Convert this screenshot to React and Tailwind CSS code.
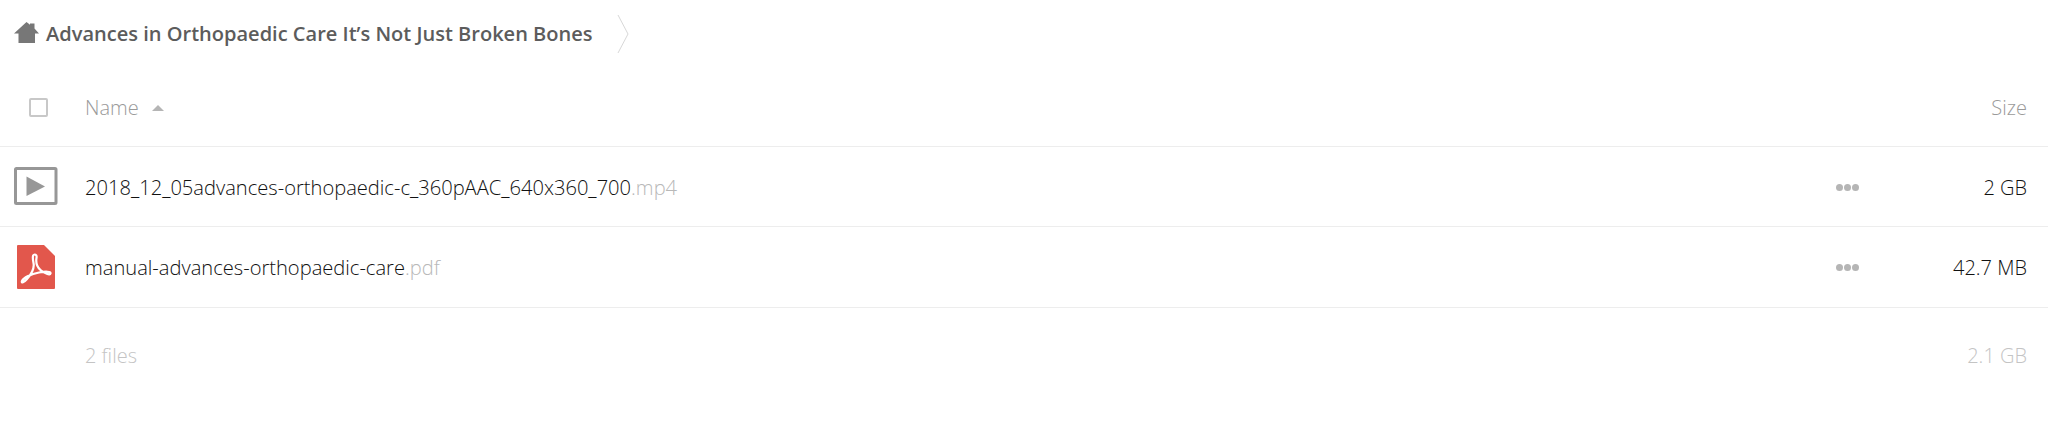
const HomeIcon = () => (
  <svg className="w-[25px] h-[21px] mb-[3px] shrink-0" viewBox="0 0 25 21" fill="#777">
    <path d="M12.500 0L16 2.800V1.500H20.500V6.500L25 11.500H21V21H4.500V11.500H0Z" />
  </svg>
);

const VideoIcon = () => (
  <svg className="w-[44px] h-[39px]" viewBox="0 0 44 39">
    <rect x="1.500" y="1.500" width="40.500" height="35" rx="1" fill="none" stroke="#979797" strokeWidth="3" />
    <path d="M12.500 9.500L31 19.500L12.500 29Z" fill="#979797" />
  </svg>
);

const PdfIcon = () => (
  <svg className="w-[38px] h-[44px]" viewBox="0 0 38 44">
    <path d="M1 0H27L38 11V43a1 1 0 0 1-1 1H1a1 1 0 0 1-1-1V1a1 1 0 0 1 1-1Z" fill="#e2574c" />
    <path
      d="M17.500 9.500C15.500 9.500 15.500 13 16.500 18C17.500 23 14.500 29 10 34C7 37.500 4 38.500 5 36C6.500 32.500 14 29 22 27.500C29 26.200 34 26.500 33.500 28.500C33 30.500 27.500 28.500 23.500 25C19.500 21.500 19 16 19.500 13C20 10.500 19 9.500 17.500 9.500Z"
      fill="none"
      stroke="#fff"
      strokeWidth="2.200"
      strokeLinejoin="round"
    />
  </svg>
);

const Dots = () => (
  <div className="flex gap-[1px]">
    <span className="w-[7px] h-[7px] rounded-full bg-[#b5b5b5]" />
    <span className="w-[7px] h-[7px] rounded-full bg-[#b5b5b5]" />
    <span className="w-[7px] h-[7px] rounded-full bg-[#b5b5b5]" />
  </div>
);

const FileRow = ({ icon, name, ext, size, height }) => (
  <div className={`flex items-center border-b border-[#ededed] ${height}`}>
    <div className="w-[85px] pl-[14px] shrink-0 flex items-center">{icon}</div>
    <div className="flex-1 pt-[2px] text-[20.13px] font-light text-[#111]">
      {name}
      <span className="text-[#b8b8b8]">{ext}</span>
    </div>
    <div className="w-[23px] mr-[21px] mt-[2px] shrink-0 flex justify-center">
      <Dots />
    </div>
    <div className="w-[168px] pt-[2px] pr-[21px] shrink-0 text-right text-[20px] font-light text-[#111]">{size}</div>
  </div>
);

export default function App() {
  return (
    <div className="font-['Open_Sans',sans-serif] bg-white w-[2048px] h-[438px] overflow-hidden">
      {/* Breadcrumb */}
      <div className="flex items-center h-[68px]">
        <div className="pl-[14px] pr-[7px] flex items-center">
          <HomeIcon />
        </div>
        <span className="text-[20.05px] font-semibold text-[#5c5c5c]">Advances in Orthopaedic Care It’s Not Just Broken Bones</span>
        <svg className="ml-[24px] w-[12px] h-[40px]" viewBox="0 0 12 40" fill="none" stroke="#d8d8d8">
          <path d="M1 1L11 20L1 39" />
        </svg>
      </div>

      {/* Table head */}
      <div className="flex items-center h-[79px] border-b border-[#ededed]">
        <div className="w-[85px] pl-[29px] shrink-0">
          <div className="w-[19px] h-[19px] border-2 border-[#c8c8c8] rounded-[2px]" />
        </div>
        <div className="flex-1 flex items-center pt-[2px] text-[20px] font-light text-[#9a9a9a]">
          Name
          <span className="ml-[13px] w-0 h-0 border-x-[6px] border-x-transparent border-b-[6px] border-b-[#b5b5b5]" />
        </div>
        <div className="pt-[2px] pr-[21px] text-[20px] font-light text-[#9a9a9a]">Size</div>
      </div>

      <FileRow height="h-[80px]" icon={<VideoIcon />} name="2018_12_05advances-orthopaedic-c_360pAAC_640x360_700" ext=".mp4" size="2 GB" />
      <FileRow height="h-[81px] pb-[1px]" icon={<div className="pl-[3px] pt-[1px]"><PdfIcon /></div>} name="manual-advances-orthopaedic-care" ext=".pdf" size="42.7 MB" />

      {/* Summary */}
      <div className="flex items-center h-[96px] text-[20px] font-light text-[#c4c4c4]">
        <div className="pl-[85px] flex-1">2 files</div>
        <div className="pr-[21px]">2.1 GB</div>
      </div>
    </div>
  );
}
